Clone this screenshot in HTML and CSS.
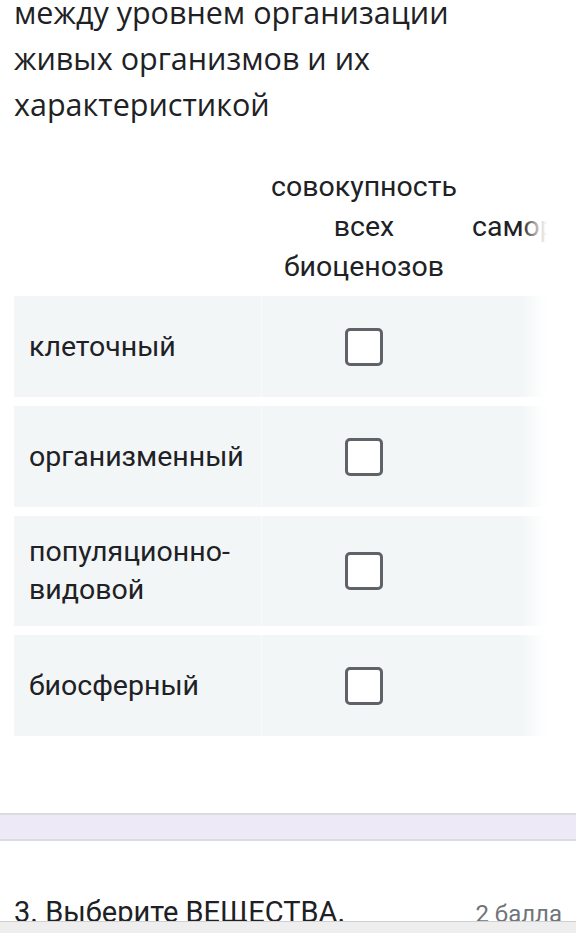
FILE: index.html
```html
<!DOCTYPE html>
<html lang="ru">
<head>
<meta charset="utf-8">
<link rel="stylesheet" href="styles.css">
</head>
<body>
<div class="card">
  <div class="title">между уровнем организации живых организмов и их характеристикой</div>
  <div class="grid-wrap">
    <div class="grid">
      <div class="head blank"></div>
      <div class="head">совокупность всех биоценозов</div>
      <div class="head">цех саморегуляция</div>

      <div class="label">клеточный</div>
      <div class="cell"><span class="box"></span></div>
      <div class="cell"><span class="box"></span></div>

      <div class="label">организменный</div>
      <div class="cell"><span class="box"></span></div>
      <div class="cell"><span class="box"></span></div>

      <div class="label">популяционно-видовой</div>
      <div class="cell"><span class="box"></span></div>
      <div class="cell"><span class="box"></span></div>

      <div class="label">биосферный</div>
      <div class="cell"><span class="box"></span></div>
      <div class="cell"><span class="box"></span></div>
    </div>
    <div class="fade"></div>
  </div>
</div>
<div class="gap"></div>
<div class="card next">
  <div class="q-head">
    <span class="q-title">3. Выберите ВЕЩЕСТВА.</span>
    <span class="q-points">2 балла</span>
  </div>
</div>
<div class="bottom-bar"></div>
</body>
</html>
```
FILE: styles.css
```css
html, body {
  margin: 0;
  padding: 0;
  background: #ffffff;
  overflow: hidden;
}
body {
  width: 576px;
  height: 948px;
  font-family: Roboto, "Noto Sans", sans-serif;
  color: #202124;
}
.card {
  padding: 0 14px;
}
.title {
  margin-top: -11px;
  font-family: "Open Sans", Roboto, sans-serif;
  font-size: 30.5px;
  line-height: 46px;
  color: #202124;
  width: 470px;
}
.grid-wrap {
  position: relative;
  margin-top: 40px;
  overflow: hidden;
  width: 548px;
  padding-bottom: 77px;
}
.grid {
  display: grid;
  grid-template-columns: 248px 204px 204px;
  row-gap: 9px;
  width: 656px;
}
.head {
  font-size: 28.5px;
  line-height: 40px;
  text-align: center;
  padding: 0 6px;
  align-self: start;
}
.head.blank {
  padding: 0;
}
.label {
  background: #f3f6f7;
  font-size: 28.5px;
  line-height: 38px;
  padding: 17px 15px;
  min-height: 67px;
  display: flex;
  align-items: center;
  border-right: 1px solid #f9fbfb;
}
.cell {
  background: #f3f6f7;
  display: flex;
  align-items: center;
  justify-content: center;
}
.box {
  width: 32px;
  height: 32px;
  border: 3.5px solid #5f6368;
  border-radius: 5px;
  background: #ffffff;
}
.fade {
  position: absolute;
  top: 0;
  right: 0;
  bottom: 0;
  width: 40px;
  background: linear-gradient(to right, rgba(255,255,255,0) 0%, rgba(255,255,255,0.8) 45%, #ffffff 64%);
}
.gap {
  height: 24px;
  background: #ede9f6;
  border-top: 2px solid #dadce0;
  border-bottom: 2px solid #dadce0;
}
.next {
  padding-top: 54px;
}
.q-head {
  display: flex;
  justify-content: space-between;
  align-items: baseline;
}
.q-title {
  font-size: 29px;
}
.q-points {
  font-size: 24px;
  color: #70757a;
}
.bottom-bar {
  position: fixed;
  left: 0;
  right: 0;
  bottom: 0;
  height: 26px;
  border-top: 1px solid #cfcfcf;
  background: linear-gradient(to bottom, #eeeeee 0, #eeeeee 11px, #ffffff 11px);
}
```
